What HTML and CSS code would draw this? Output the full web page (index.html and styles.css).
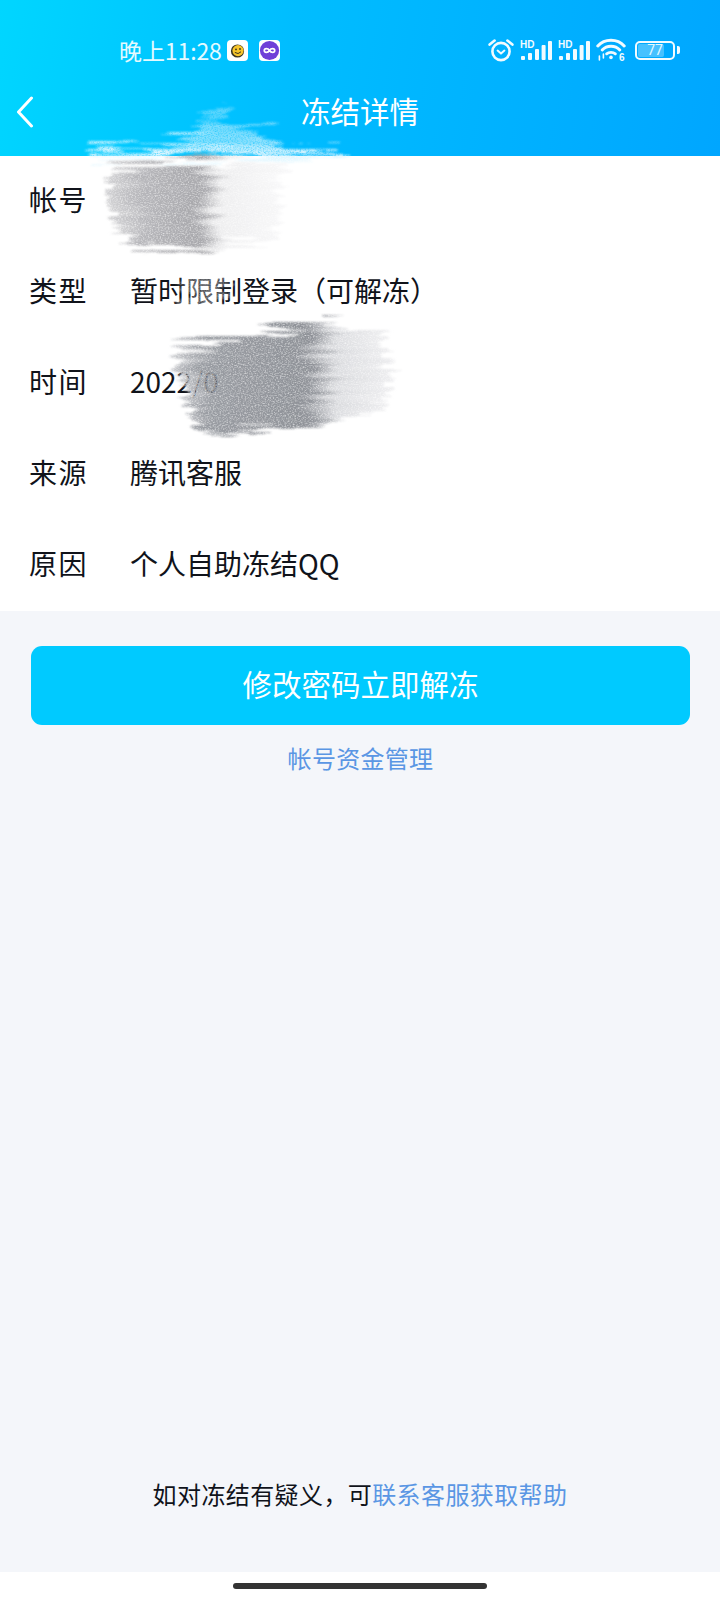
FILE: index.html
```html
<!DOCTYPE html>
<html lang="zh-CN">
<head>
    <meta charset="UTF-8">
    <meta name="viewport" content="width=device-width, initial-scale=1.0">
    <title>冻结详情</title>
    <link rel="stylesheet" href="styles.css">
</head>
<body>
    <div class="page">
        <header class="top">
            <div class="status">
                <span class="clock">晚上11:28</span>
                <span class="app-badge">
                    <svg width="21" height="21" viewBox="0 0 21 21">
                        <rect width="21" height="21" rx="4" fill="#fff"/>
                        <circle cx="10.5" cy="11" r="6.6" fill="#3a3320"/>
                        <circle cx="11" cy="10.6" r="5.6" fill="#f6c52c"/>
                        <circle cx="9" cy="9.4" r="0.9" fill="#3a3320"/>
                        <circle cx="13" cy="9" r="0.9" fill="#3a3320"/>
                        <path d="M7.8 12.4 q3.4 2.6 6.2 -0.6" fill="none" stroke="#3a3320" stroke-width="1"/>
                    </svg>
                </span>
                <span class="app-badge">
                    <svg width="21" height="21" viewBox="0 0 21 21">
                        <rect width="21" height="21" rx="4" fill="#fff"/>
                        <circle cx="10.5" cy="10.5" r="9.6" fill="#6f3fd8"/>
                        <path d="M10.5 10.5 c-1.5 -2.4 -5.2 -2.4 -5.2 0 c0 2.4 3.7 2.4 5.2 0 c1.5 -2.4 5.2 -2.4 5.2 0 c0 2.4 -3.7 2.4 -5.2 0z" fill="none" stroke="#fff" stroke-width="1.7"/>
                    </svg>
                </span>

                <div class="status-icons">
                    <svg width="26" height="24" viewBox="0 0 26 24" fill="none" stroke="#f2fbff">
                        <circle cx="13" cy="13.5" r="8.6" stroke-width="2.6"/>
                        <path d="M9.6 12.6 l3.4 3 l3.4 -3" stroke-width="2" stroke-linecap="round" stroke-linejoin="round"/>
                        <path d="M1.6 6.6 l5 -4 M24.4 6.6 l-5 -4" stroke-width="2.6" stroke-linecap="round"/>
                    </svg>
                    <svg width="32" height="22" viewBox="0 0 32 22" fill="#f2fbff">
                        <text x="0" y="8.5" class="hd">HD</text>
                        <rect x="1" y="17" width="4" height="4" rx="1"/>
                        <rect x="8" y="14" width="4" height="7" rx="1"/>
                        <rect x="15" y="10" width="4" height="11" rx="1"/>
                        <rect x="21.6" y="6" width="4" height="15" rx="1"/>
                        <rect x="28" y="2" width="4" height="19" rx="1"/>
                    </svg>
                    <svg width="32" height="22" viewBox="0 0 32 22" fill="#f2fbff">
                        <text x="0" y="8.5" class="hd">HD</text>
                        <rect x="1" y="17" width="4" height="4" rx="1"/>
                        <rect x="8" y="14" width="4" height="7" rx="1"/>
                        <rect x="15" y="10" width="4" height="11" rx="1"/>
                        <rect x="21.6" y="6" width="4" height="15" rx="1"/>
                        <rect x="28" y="2" width="4" height="19" rx="1"/>
                    </svg>
                    <svg class="wifi" width="30" height="26" viewBox="0 0 30 26" fill="none" stroke="#f2fbff" stroke-linecap="round">
                        <path d="M1.8 9 C8.6 1.4 21.4 1.4 28.2 9" stroke-width="3"/>
                        <path d="M6.2 13 C10.8 8 19.2 8 23.8 13" stroke-width="3"/>
                        <path d="M10.6 16.8 C13 14.8 17 14.8 19.4 16.8" stroke-width="2.8"/>
                        <circle cx="15" cy="20.4" r="1.8" fill="#f2fbff" stroke="none"/>
                        <path d="M3.4 19 v4 M7.4 17 v4" stroke-width="1.6"/>
                        <text x="23" y="24" class="wifi-six">6</text>
                    </svg>
                    <div class="battery">
                        <div class="battery-body"><span class="battery-fill"></span><span class="battery-num">77</span></div>
                        <span class="battery-tip"></span>
                    </div>
                </div>
            </div>

            <nav class="nav">
                <svg width="18" height="32" viewBox="0 0 18 32" fill="none" stroke="#fff" stroke-width="3" stroke-linecap="round" stroke-linejoin="round">
                    <path d="M15.5 2 L2.5 16 L15.5 30"/>
                </svg>
                <h1 class="title">冻结详情</h1>
            </nav>
        </header>

        <section class="details">
            <div class="row"><span class="row-label">帐号</span></div>
            <div class="row"><span class="row-label">类型</span><span>暂时限制登录&#xFF08;可解冻&#xFF09;</span></div>
            <div class="row"><span class="row-label">时间</span><span>2022/0</span></div>
            <div class="row"><span class="row-label">来源</span><span>腾讯客服</span></div>
            <div class="row"><span class="row-label">原因</span><span>个人自助冻结QQ</span></div>
        </section>

        <section class="actions">
            <button class="unfreeze">修改密码立即解冻</button>
            <a class="fund-link" href="#">帐号资金管理</a>
        </section>

        <p class="help">如对冻结有疑义&#xFF0C;可<a href="#">联系客服获取帮助</a></p>

        <div class="home-bar"><span class="home-pill"></span></div>

        <!-- 涂抹痕迹 -->
        <svg class="smudges" width="720" height="460" viewBox="0 0 720 460">
            <defs>
                <filter id="pencil" filterUnits="userSpaceOnUse" x="40" y="90" width="380" height="360">
                    <feTurbulence type="fractalNoise" baseFrequency="0.012 0.22" numOctaves="3" seed="4" result="streak"/>
                    <feDisplacementMap in="SourceGraphic" in2="streak" scale="44" xChannelSelector="R" yChannelSelector="G" result="rough"/>
                    <feGaussianBlur in="rough" stdDeviation="1.2" result="soft"/>
                    <feTurbulence type="fractalNoise" baseFrequency="0.6 0.9" numOctaves="2" seed="9" result="grain"/>
                    <feColorMatrix in="grain" type="matrix" values="0 0 0 0 0  0 0 0 0 0  0 0 0 0 0  0 0 0 -1.3 1.55" result="mask"/>
                    <feComposite in="soft" in2="mask" operator="in"/>
                </filter>
                <linearGradient id="fadeA" x1="0" x2="1" y1="0" y2="0">
                    <stop offset="0" stop-color="#d4d4d6"/>
                    <stop offset="0.2" stop-color="#b6b6ba"/>
                    <stop offset="0.5" stop-color="#a8a8ac"/>
                    <stop offset="0.64" stop-color="#efeff0"/>
                    <stop offset="1" stop-color="#f8f8f9"/>
                </linearGradient>
                <linearGradient id="fadeB" x1="0" x2="1" y1="0" y2="0">
                    <stop offset="0" stop-color="#d2d3d6"/>
                    <stop offset="0.16" stop-color="#9a9da3"/>
                    <stop offset="0.62" stop-color="#8f9298"/>
                    <stop offset="0.76" stop-color="#dcdde0"/>
                    <stop offset="1" stop-color="#eeeef0"/>
                </linearGradient>
                <linearGradient id="fadeC" x1="0" x2="0" y1="0" y2="1">
                    <stop offset="0" stop-color="#a8e4fb" stop-opacity="0.35"/>
                    <stop offset="0.72" stop-color="#c6effd" stop-opacity="0.7"/>
                    <stop offset="1" stop-color="#eefaff"/>
                </linearGradient>
            </defs>
            <g filter="url(#pencil)">
                <path d="M88 146 L180 144 L222 104 L230 124 L270 132 L272 144 L340 148 L340 157 L88 157Z" fill="url(#fadeC)"/>
            </g>
            <g filter="url(#pencil)">
                <path d="M112 164 L284 162 L276 240 L140 248 L112 226Z" fill="url(#fadeA)"/>
                <path d="M182 270 L226 266 L228 316 L184 316Z" fill="#fff" opacity="0.4"/>
            </g>
            <g filter="url(#pencil)">
                <path d="M176 346 L250 336 L324 322 L386 338 L386 412 L262 432 L200 430 L184 396Z" fill="url(#fadeB)"/>
            </g>
        </svg>
    </div>
</body>
</html>
```

FILE: styles.css
```css
* {
    box-sizing: border-box;
}

body {
    margin: 0;
    font-family: "Noto Sans CJK SC", "Noto Sans", sans-serif;
    color: #10131a;
}

a {
    text-decoration: none;
    color: #5a96e4;
}

.page {
    position: relative;
    display: flex;
    flex-direction: column;
    width: 720px;
    height: 1600px;
    background-color: #f4f6fa;
}

/* 顶部 */
.top {
    height: 156px;
    background: linear-gradient(100deg, #00d6ff 0%, #00bdff 40%, #00a6ff 100%);
    color: #fff;
}

.status {
    display: flex;
    align-items: center;
    height: 70px;
    padding: 30px 40px 0 119px;
}

.clock {
    font-size: 23px;
    letter-spacing: -0.1px;
    color: #e4faff;
    margin-right: 5px;
}

.app-badge {
    display: flex;
    margin-right: 11px;
}

.status-icons {
    display: flex;
    align-items: center;
    gap: 6px;
    margin-left: auto;
}

.hd {
    font-family: "Liberation Sans", sans-serif;
    font-size: 10px;
    font-weight: 700;
}

.wifi {
    margin-right: 3px;
}

.wifi-six {
    font-family: "Liberation Sans", sans-serif;
    font-size: 10px;
    font-weight: 700;
    fill: #f2fbff;
    stroke: none;
}

.battery {
    display: flex;
    align-items: center;
    gap: 2px;
}

.battery-body {
    position: relative;
    width: 40px;
    height: 19px;
    border: 2px solid #f2fbff;
    border-radius: 5px;
    padding: 1px;
}

.battery-fill {
    display: block;
    width: 77%;
    height: 100%;
    background-color: rgba(255, 255, 255, 0.28);
    border-radius: 2px;
}

.battery-num {
    position: absolute;
    left: 0;
    right: 0;
    top: -1px;
    text-align: center;
    font-family: "Roboto", sans-serif;
    font-size: 14px;
    line-height: 17px;
    color: #e4faff;
}

.battery-tip {
    width: 3px;
    height: 8px;
    background-color: #f2fbff;
    border-radius: 0 2px 2px 0;
}

.nav {
    display: grid;
    grid-template-columns: 1fr auto 1fr;
    align-items: center;
    height: 84px;
    padding: 0 16px;
}

.title {
    margin: 0;
    font-size: 29.5px;
    font-weight: 400;
    line-height: 32px;
    padding-bottom: 4px;
}

/* 详情 */
.details {
    background-color: #fff;
}

.row {
    display: flex;
    align-items: center;
    height: 91px;
    padding: 0 0 5px 29px;
    font-size: 28px;
}

.row-label {
    width: 101px;
    letter-spacing: 1.4px;
}

/* 按钮 */
.actions {
    display: flex;
    flex-direction: column;
    align-items: center;
    padding: 35px 30px 0 31px;
}

.unfreeze {
    width: 100%;
    height: 79px;
    padding-bottom: 6px;
    background-color: #00caff;
    color: #fff;
    border: none;
    border-radius: 11px;
    font-family: inherit;
    font-size: 29.5px;
}

.fund-link {
    margin-top: 15px;
    font-size: 24px;
    letter-spacing: 0.3px;
    line-height: 36px;
}

.help {
    margin: auto 0 60px;
    text-align: center;
    font-size: 24px;
    letter-spacing: 0.4px;
    line-height: 36px;
}

.home-bar {
    display: flex;
    align-items: center;
    justify-content: center;
    height: 28px;
    background-color: #fff;
}

.home-pill {
    width: 254px;
    height: 6px;
    background-color: #333;
    border-radius: 3px;
}

.smudges {
    position: absolute;
    left: 0;
    top: 0;
    pointer-events: none;
}
```
